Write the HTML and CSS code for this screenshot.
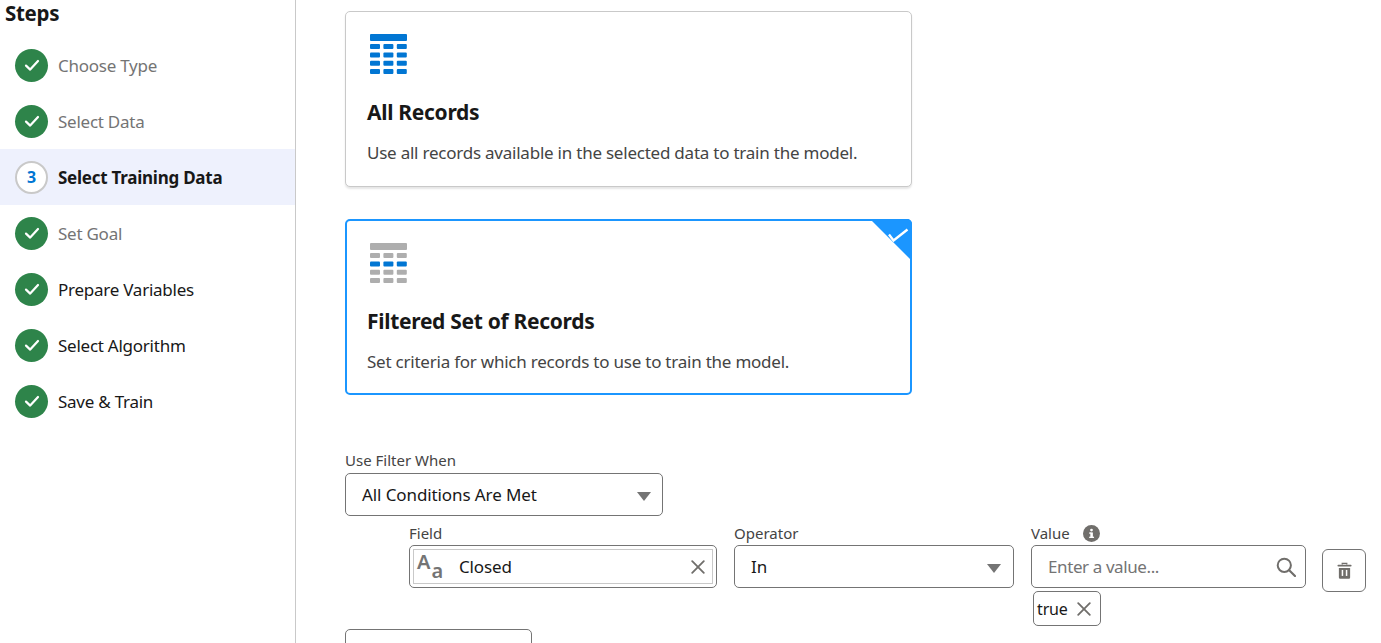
FILE: index.html
```html
<!DOCTYPE html>
<html lang="en">
<head>
<meta charset="utf-8">
<title>Select Training Data</title>
<link rel="stylesheet" href="styles.css">
</head>
<body>
<svg class="defs" width="0" height="0" aria-hidden="true">
  <symbol id="check" viewBox="0 0 16 16"><path d="M2 8.6 6.2 12.6 14 4" fill="none" stroke="#fff" stroke-width="2.2" stroke-linecap="round" stroke-linejoin="round"/></symbol>
  <symbol id="cross" viewBox="0 0 14 14"><path d="M1.2 1.2 12.8 12.8M12.8 1.2 1.2 12.8" fill="none" stroke="#706e6b" stroke-width="1.8" stroke-linecap="round"/></symbol>
  <symbol id="caret" viewBox="0 0 14 9"><path d="M0 0H14L7 9Z" fill="#747474"/></symbol>
</svg>
<div class="app">
  <aside class="sidebar">
    <h2 class="steps-title">Steps</h2>
    <ol class="steps">
      <li class="step muted"><span class="dot"><svg class="check"><use href="#check"/></svg></span><span class="step-name">Choose Type</span></li>
      <li class="step muted"><span class="dot"><svg class="check"><use href="#check"/></svg></span><span class="step-name">Select Data</span></li>
      <li class="step current"><span class="dot num">3</span><span class="step-name">Select Training Data</span></li>
      <li class="step muted"><span class="dot"><svg class="check"><use href="#check"/></svg></span><span class="step-name">Set Goal</span></li>
      <li class="step"><span class="dot"><svg class="check"><use href="#check"/></svg></span><span class="step-name">Prepare Variables</span></li>
      <li class="step"><span class="dot"><svg class="check"><use href="#check"/></svg></span><span class="step-name">Select Algorithm</span></li>
      <li class="step"><span class="dot"><svg class="check"><use href="#check"/></svg></span><span class="step-name">Save &amp; Train</span></li>
    </ol>
  </aside>
  <main class="main">
    <section class="card">
      <svg class="table-icon" viewBox="0 0 37 41">
        <g fill="#0176d3">
          <rect x="0" y="0" width="37" height="7" rx="1"/>
          <rect x="0" y="10" width="10" height="5" rx="1"/><rect x="13.4" y="10" width="10" height="5" rx="1"/><rect x="26.8" y="10" width="10" height="5" rx="1"/>
          <rect x="0" y="18.4" width="10" height="5" rx="1"/><rect x="13.4" y="18.4" width="10" height="5" rx="1"/><rect x="26.8" y="18.4" width="10" height="5" rx="1"/>
          <rect x="0" y="26.7" width="10" height="5" rx="1"/><rect x="13.4" y="26.7" width="10" height="5" rx="1"/><rect x="26.8" y="26.7" width="10" height="5" rx="1"/>
          <rect x="0" y="35" width="10" height="5" rx="1"/><rect x="13.4" y="35" width="10" height="5" rx="1"/><rect x="26.8" y="35" width="10" height="5" rx="1"/>
        </g>
      </svg>
      <h3 class="card-title">All Records</h3>
      <p class="card-text">Use all records available in the selected data to train the model.</p>
    </section>
    <section class="card selected">
      <span class="corner"><svg class="corner-check" viewBox="0 0 22 16"><path d="M2 6.5 6.5 12.5 20.5 1.5" fill="none" stroke="#fff" stroke-width="2.3"/></svg></span>
      <svg class="table-icon" viewBox="0 0 37 41">
        <g fill="#aeaeae">
          <rect x="0" y="0" width="37" height="7" rx="1"/>
          <rect x="0" y="10" width="10" height="5" rx="1"/><rect x="13.4" y="10" width="10" height="5" rx="1"/><rect x="26.8" y="10" width="10" height="5" rx="1"/>
          <rect x="0" y="26.7" width="10" height="5" rx="1"/><rect x="13.4" y="26.7" width="10" height="5" rx="1"/><rect x="26.8" y="26.7" width="10" height="5" rx="1"/>
          <rect x="0" y="35" width="10" height="5" rx="1"/><rect x="13.4" y="35" width="10" height="5" rx="1"/><rect x="26.8" y="35" width="10" height="5" rx="1"/>
        </g>
        <g fill="#0176d3">
          <rect x="0" y="18.4" width="10" height="5" rx="1"/><rect x="13.4" y="18.4" width="10" height="5" rx="1"/><rect x="26.8" y="18.4" width="10" height="5" rx="1"/>
        </g>
      </svg>
      <h3 class="card-title">Filtered Set of Records</h3>
      <p class="card-text">Set criteria for which records to use to train the model.</p>
    </section>

    <div class="filter-when">
      <label class="label">Use Filter When</label>
      <div class="box select-when"><span>All Conditions Are Met</span><svg class="caret"><use href="#caret"/></svg></div>
    </div>

    <div class="filter-row">
      <div class="col col-field">
        <label class="label">Field</label>
        <div class="box field-outer">
          <div class="field-inner">
            <span class="aa"><span class="aa-big">A</span><span class="aa-small">a</span></span>
            <span class="field-val">Closed</span>
            <svg class="cross"><use href="#cross"/></svg>
          </div>
        </div>
      </div>
      <div class="col col-op">
        <label class="label">Operator</label>
        <div class="box select-op"><span>In</span><svg class="caret"><use href="#caret"/></svg></div>
      </div>
      <div class="col col-val">
        <label class="label">Value <svg class="info" viewBox="0 0 16 16"><circle cx="8" cy="8" r="8" fill="#706e6b"/><rect x="6.9" y="7" width="2.4" height="5" fill="#fff"/><rect x="5.8" y="7" width="2" height="1.2" fill="#fff"/><rect x="5.8" y="11" width="4.6" height="1.2" fill="#fff"/><circle cx="8" cy="4.8" r="1.3" fill="#fff"/></svg></label>
        <div class="box search">
          <span class="placeholder">Enter a value...</span>
          <svg class="search-icon" viewBox="0 0 20 20"><circle cx="8.3" cy="8.3" r="6.6" fill="none" stroke="#706e6b" stroke-width="2"/><path d="M13.2 13.2 19 19" stroke="#706e6b" stroke-width="2.2" stroke-linecap="round"/></svg>
        </div>
        <div class="pill"><span>true</span><svg class="pill-x"><use href="#cross"/></svg></div>
      </div>
      <button class="trash" aria-label="Delete">
        <svg class="trash-icon" viewBox="0 0 16 18"><path d="M5.6 2.6V1.4h4.8v1.2" fill="none" stroke="#706e6b" stroke-width="1.4"/><rect x="0.5" y="2.8" width="15" height="2" rx=".8" fill="#706e6b"/><path d="M2 6.2h12v10.2a1.3 1.3 0 0 1-1.3 1.3H3.3A1.3 1.3 0 0 1 2 16.4Z" fill="#706e6b"/><rect x="5" y="8.4" width="1.6" height="6.4" fill="#fff"/><rect x="9.4" y="8.4" width="1.6" height="6.4" fill="#fff"/></svg>
      </button>
    </div>
    <div class="box add-btn"></div>
  </main>
</div>
</body>
</html>
```

FILE: styles.css
```css
* { box-sizing: border-box; }
html, body { margin: 0; height: 643px; overflow: hidden; background: #fff; }
body { font-family: "Noto Sans", "Open Sans", sans-serif; color: #181818; font-size: 16px; }
.defs { position: absolute; }
.app { display: flex; height: 643px; overflow: hidden; }

.sidebar { width: 296px; flex: none; border-right: 1px solid #c9c9c9; }
.steps-title { margin: 0; padding: 2px 0 0 5px; height: 37px; font-size: 20.5px; line-height: 22px; font-weight: 700; letter-spacing: -.3px; }
.steps { list-style: none; margin: 0; padding: 0; }
.step { display: flex; align-items: center; gap: 10px; height: 56px; padding-left: 15px; font-size: 17px; letter-spacing: -.25px; }
.step-name { padding-top: 1px; }
.step.muted { color: #747474; }
.step.current { background: #eef1fd; font-weight: 700; }
.dot { width: 33px; height: 33px; border-radius: 50%; background: #2e844a; display: flex; align-items: center; justify-content: center; flex: none; }
.check { width: 16px; height: 16px; }
.dot.num { background: #fff; border: 2px solid #c9c9c9; color: #0176d3; font-size: 16px; font-weight: 700; }

.main { flex: 1; min-width: 0; padding: 11px 0 0 49px; }
.card { position: relative; width: 567px; height: 176px; margin-bottom: 32px; padding: 22px 21px 0 21px; border: 1px solid #c9c9c9; border-radius: 5px; box-shadow: 0 2px 2px rgba(0,0,0,.1); background: #fff; }
.card.selected { border: 2px solid #1b96ff; box-shadow: none; padding: 22px 20px 0 20px; }
.table-icon { display: block; width: 37px; height: 41px; margin-left: 3px; }
.card-title { margin: 22px 0 0; font-size: 21px; line-height: 30px; font-weight: 700; letter-spacing: -.3px; color: #181818; }
.card-text { margin: 15px 0 0; font-size: 17px; line-height: 22px; color: #444; letter-spacing: -.23px; }
.corner { position: absolute; top: -2px; right: -2px; width: 42px; height: 42px; background: #1b96ff; clip-path: polygon(0 0, 100% 0, 100% 100%); border-top-right-radius: 5px; }
.corner-check { position: absolute; top: 9px; left: 17px; width: 22px; height: 16px; }

.label { display: block; font-size: 15px; line-height: 18px; color: #444; }
.filter-when { margin-top: 56px; }
.box { border: 1px solid #747474; border-radius: 5px; background: #fff; }
.select-when, .select-op { display: flex; align-items: center; justify-content: space-between; height: 43px; padding: 0 11px 0 16px; font-size: 17px; letter-spacing: -.1px; }
.select-when { width: 318px; margin-top: 4px; }
.caret { width: 14px; height: 9px; margin-top: 3px; }

.filter-row { display: flex; align-items: flex-start; margin-top: 8px; margin-left: 64px; }
.col-field { width: 308px; margin-right: 17px; }
.col-op { width: 280px; margin-right: 17px; }
.col-val { width: 275px; margin-right: 16px; }
.filter-row .label { display: flex; align-items: center; gap: 13px; height: 21px; padding-bottom: 2px; line-height: 19px; }
.field-outer { height: 43px; padding: 3px; }
.field-inner { display: flex; align-items: center; height: 35px; border: 1px solid #c9c9c9; padding: 0 7px 0 3px; font-size: 17px; }
.aa { display: flex; width: 42px; height: 33px; color: #747474; font-size: 20px; font-weight: 600; flex: none; }
.aa-big { line-height: 24px; }
.aa-small { line-height: 24px; margin-top: 9px; margin-left: 1px; }
.field-val { flex: 1; letter-spacing: -.15px; }
.cross { width: 14px; height: 14px; }
.select-op { padding-right: 12px; }
.search { display: flex; align-items: center; justify-content: space-between; height: 43px; padding: 0 9px 0 16px; font-size: 17px; }
.placeholder { color: #747474; letter-spacing: -.4px; }
.search-icon { width: 20px; height: 20px; }
.info { width: 17px; height: 17px; }
.pill { display: inline-flex; align-items: center; gap: 9px; height: 35px; width: 68px; margin: 3px 0 0 2px; padding: 0 8px 0 3px; border: 1px solid #747474; border-radius: 5px; font-size: 16px; letter-spacing: -.15px; }
.pill-x { width: 14px; height: 14px; }
.trash { width: 44px; height: 43px; margin-top: 25px; padding: 0; display: flex; align-items: center; justify-content: center; background: #fff; border: 1px solid #747474; border-radius: 6px; }
.trash-icon { width: 15px; height: 17px; }
.add-btn { width: 187px; height: 43px; margin-top: 3px; }
```
